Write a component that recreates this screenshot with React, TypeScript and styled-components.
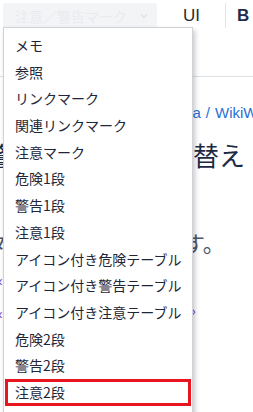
import React from 'react';
import styled, {createGlobalStyle} from 'styled-components';

const GlobalStyle = createGlobalStyle`
  html, body {
    margin: 0;
    padding: 0;
    background: #fff;
    overflow: hidden;
  }
  body {
    font-family: "Liberation Sans", "Noto Sans CJK JP", sans-serif;
  }
`

const menuItems = [
    'メモ',
    '参照',
    'リンクマーク',
    '関連リンクマーク',
    '注意マーク',
    '危険1段',
    '警告1段',
    '注意1段',
    'アイコン付き危険テーブル',
    'アイコン付き警告テーブル',
    'アイコン付き注意テーブル',
    '危険2段',
    '警告2段',
    '注意2段',
]

const crumbs = ['Docs', 'Media', 'WikiWiki']

export default function App() {
    return (
        <Page>
            <GlobalStyle/>
            <Toolbar>
                <SelectButton>
                    <span>注意／警告マーク</span>
                    <svg width="10" height="10" viewBox="0 0 10 10">
                        <path d="M2 3.5 L5 6.5 L8 3.5" fill="none" stroke="#e2e5ea" strokeWidth="1.8"/>
                    </svg>
                </SelectButton>
                <ToolText>UI</ToolText>
                <Divider/>
                <ToolText $bold>B</ToolText>
            </Toolbar>
            <Content>
                <Breadcrumb>
                    {crumbs.map((c, i) => (
                        <React.Fragment key={c}>
                            {i > 0 && <span>/</span>}
                            <span>{c}</span>
                        </React.Fragment>
                    ))}
                </Breadcrumb>
                <Heading>警告マークの切り替え</Heading>
                <Lead>段落スタイルを選択できます。</Lead>
                <LinkRow><span>‹ 前へ</span></LinkRow>
                <LinkRow><span>‹ 前のページ</span><span>›</span></LinkRow>
            </Content>
            <Menu>
                {menuItems.map((item, i) => (
                    <MenuItem key={item} $active={i === menuItems.length - 1}>{item}</MenuItem>
                ))}
            </Menu>
        </Page>
    );
}

const Page = styled.div`
  position: relative;
  width: 253px;
  height: 412px;
  overflow: hidden;
`

const Toolbar = styled.div`
  display: flex;
  align-items: center;
  height: 25px;
  padding: 3px 0 0 3px;
`

const SelectButton = styled.div`
  display: flex;
  align-items: center;
  justify-content: space-between;
  box-sizing: border-box;
  width: 154px;
  height: 25px;
  padding: 0 8px 0 12px;
  background: #f3f4f6;
  border-radius: 3px;
  color: #e9ebee;
  font-size: 14px;
  font-family: "Noto Sans CJK JP", sans-serif;
`

const ToolText = styled.div<{ $bold?: boolean }>`
  font-size: 17px;
  font-weight: ${p => p.$bold ? 700 : 400};
  color: ${p => p.$bold ? '#1f2d4a' : '#2b2b2b'};
  margin-left: ${p => p.$bold ? '11px' : '26px'};
`

const Divider = styled.div`
  width: 1px;
  height: 25px;
  background: #e2e4e8;
  margin-left: 25px;
`

const Content = styled.div`
  margin-top: 48px;
  border-top: 1px solid #dcdfe4;
  padding-top: 27px;
  margin-left: -8px;
`

const Breadcrumb = styled.div`
  display: flex;
  gap: 5px;
  font-size: 15px;
  color: #2a6fd6;
  white-space: nowrap;
  padding-left: 119.6px;
`

const Heading = styled.div`
  font-family: "Noto Sans CJK JP", sans-serif;
  font-size: 26px;
  line-height: 36px;
  color: #1c2a44;
  margin: 16px 0 0 -7px;
  white-space: nowrap;
`

const Lead = styled.div`
  font-family: "Noto Sans CJK JP", sans-serif;
  font-size: 22px;
  line-height: 30px;
  color: #4f5664;
  margin: 54px 0 0 -73px;
  white-space: nowrap;
`

const LinkRow = styled.div`
  display: flex;
  justify-content: space-between;
  width: 198px;
  font-size: 14px;
  color: #7a3fe0;
  margin: 13px 0 0 6px;
  white-space: nowrap;
`

const Menu = styled.ul`
  position: absolute;
  left: 3px;
  top: 27px;
  width: 190px;
  box-sizing: border-box;
  margin: 0;
  padding: 4px 1px 8px;
  list-style: none;
  background: #fff;
  border: 1px solid #cfd2d6;
  box-shadow: 2px 3px 5px rgba(0, 0, 0, 0.22);
`

const MenuItem = styled.li<{ $active?: boolean }>`
  height: 26.7px;
  line-height: 26.7px;
  padding-left: 10px;
  font-family: "Noto Sans CJK JP", sans-serif;
  font-size: 14px;
  color: #1e2638;
  white-space: nowrap;
  outline: ${p => p.$active ? '3px solid #e8141f' : 'none'};
  outline-offset: -3px;
`
